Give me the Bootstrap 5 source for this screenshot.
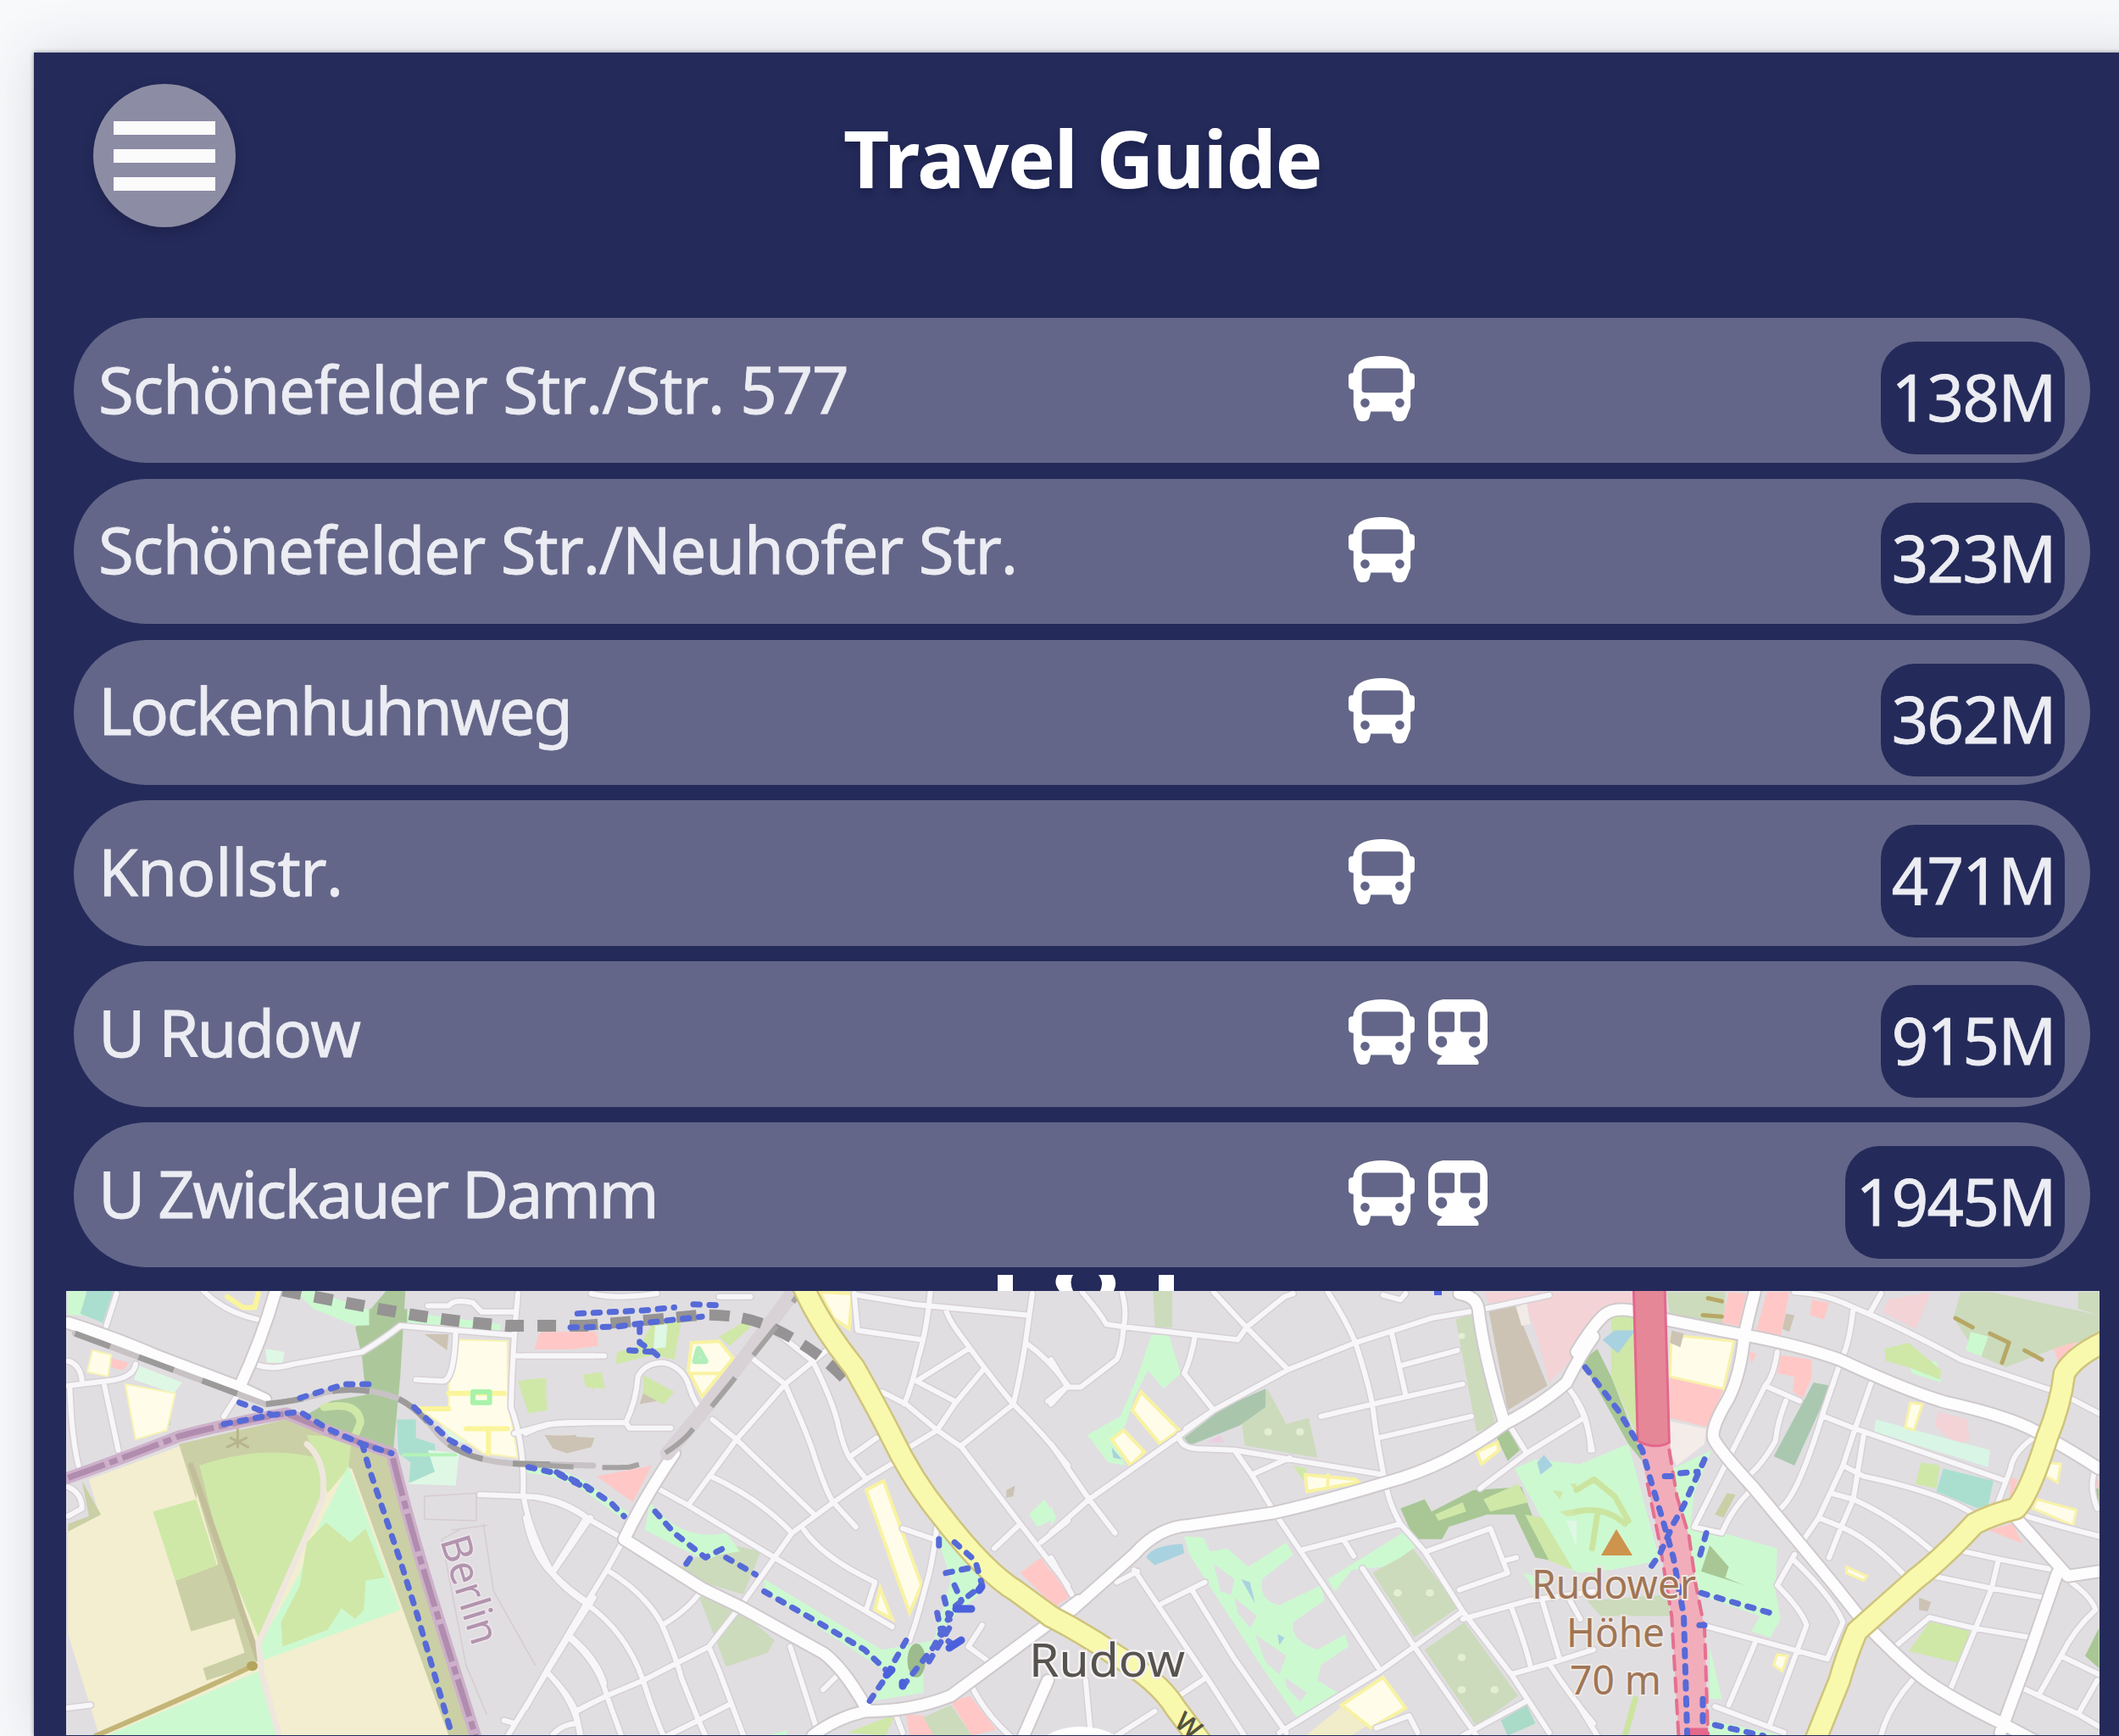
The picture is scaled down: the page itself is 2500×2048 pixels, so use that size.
<!DOCTYPE html>
<html lang="de">
<head>
<meta charset="utf-8">
<title>Travel Guide</title>
<link href="https://cdn.jsdelivr.net/npm/bootstrap@5.3.0/dist/css/bootstrap.min.css" rel="stylesheet">
<script src="https://cdn.jsdelivr.net/npm/bootstrap@5.3.0/dist/js/bootstrap.bundle.min.js"></script>
<style>
html,body{height:2048px;overflow:hidden}
body{background:#f8f9fb;font-family:"Noto Sans","Open Sans",sans-serif;padding:62px 0 0 40px}
.guide{background:#242b5a;width:2500px;height:1986px;box-shadow:0 0 60px rgba(60,60,80,.16),0 0 5px rgba(30,30,60,.45)}
.guide-head{height:313px;padding:37px 0 0 70px}
.menu-btn{width:168px;height:169px;background:#8c8ca4;gap:17px;box-shadow:0 6px 14px rgba(20,15,50,.35)}
.menu-btn:hover{background:#8c8ca4}
.menu-btn span{width:120px;height:16px;background:#fbfbfc}
.guide-title{color:#fff;font-weight:700;font-size:94px;line-height:110px;letter-spacing:-1.4px;margin:32px 0 0 717px;text-shadow:0 5px 10px rgba(15,15,50,.4);white-space:nowrap}
.stops{width:2379px;margin-left:47px;gap:18.4px}
.stop{height:171.4px;border-radius:86px;background:#636688;padding:0 30px 0 29px;color:#ececf3;font-size:76px;line-height:100px;font-kerning:none;-webkit-text-stroke:.8px #ececf3}
.stop-name{width:1475px;white-space:nowrap;padding-bottom:4px;letter-spacing:-1px}
.stop:nth-child(2) .stop-name{letter-spacing:-1.2px}
.stop:nth-child(3) .stop-name,.stop:nth-child(6) .stop-name{letter-spacing:-2.5px}
.stop:nth-child(4) .stop-name{letter-spacing:-.7px}
.stop:nth-child(5) .stop-name{letter-spacing:-2px}
.kinds{gap:16px;padding-bottom:4px}
.kinds svg{height:77px;display:block}
.dist{height:133px;border-radius:40px;background:#242b5a;padding:0 11px 3px 13px;margin-top:18px;letter-spacing:-1.5px}
.map-wrap{position:relative;width:2399px;height:524px;margin:28px 0 0 38px}
.map-wrap>svg{display:block}
.handle{position:absolute;left:1098px;top:-19px}
.map-svg path,.map-svg ellipse,.map-svg circle{vector-effect:non-scaling-stroke}
.ln{fill:none;stroke-linejoin:round;stroke-linecap:round}
</style>
</head>
<body>
<svg width="0" height="0" class="position-absolute">
<symbol id="bus" viewBox="0 0 80 80" preserveAspectRatio="none"><path fill="#fff" fill-rule="evenodd" d="M6 19C7 5 24 0 40 0s33 5 34 19l1 2h2q3 1 3 4v11q0 5-4 5l-1 1v20l-5 13q-2 5-8 5-7 0-8-4l-2-8H27l-2 8q-2 4-8 4-6 0-7-5L6 62V42l-1-1q-5 0-5-5V25q0-3 3-4h2zM21 15q-5 0-5 5v21q0 4 5 4h40q5 0 5-4V20q0-5-5-5zM20 52a5.500 5.500 0 1 0 0 11 5.500 5.500 0 0 0 0-11zm42 0a5.500 5.500 0 1 0 0 11 5.500 5.500 0 0 0 0-11z"/></symbol>
<symbol id="train" viewBox="0 0 72 80" preserveAspectRatio="none"><path fill="#fff" fill-rule="evenodd" d="M18 0h36q18 3 18 20v32q0 13-17 17l5 5q3 6-1 6H13q-4 0-1-6l5-5Q0 65 0 52V20Q0 3 18 0zM11 15q-3 0-3 3v19q0 3 3 3h18q3 0 3-3V18q0-3-3-3zm31 0q-3 0-3 3v19q0 3 3 3h18q3 0 3-3V18q0-3-3-3zM16 45a7 7 0 1 0 0 14 7 7 0 0 0 0-14zm40 0a7 7 0 1 0 0 14 7 7 0 0 0 0-14z"/></symbol>
</svg>
<main class="guide">
<header class="guide-head d-flex align-items-start">
<button class="menu-btn btn rounded-circle border-0 p-0 d-flex flex-column align-items-center justify-content-center" aria-label="Menu"><span></span><span></span><span></span></button>
<h1 class="guide-title">Travel Guide</h1>
</header>
<section class="stops d-flex flex-column">
<div class="stop d-flex align-items-center"><div class="stop-name">Schönefelder Str./Str. 577</div><div class="kinds d-flex"><svg width="78"><use href="#bus"/></svg></div><div class="dist d-flex align-items-center ms-auto">138M</div></div>
<div class="stop d-flex align-items-center"><div class="stop-name">Schönefelder Str./Neuhofer Str.</div><div class="kinds d-flex"><svg width="78"><use href="#bus"/></svg></div><div class="dist d-flex align-items-center ms-auto">323M</div></div>
<div class="stop d-flex align-items-center"><div class="stop-name">Lockenhuhnweg</div><div class="kinds d-flex"><svg width="78"><use href="#bus"/></svg></div><div class="dist d-flex align-items-center ms-auto">362M</div></div>
<div class="stop d-flex align-items-center"><div class="stop-name">Knollstr.</div><div class="kinds d-flex"><svg width="78"><use href="#bus"/></svg></div><div class="dist d-flex align-items-center ms-auto">471M</div></div>
<div class="stop d-flex align-items-center"><div class="stop-name">U Rudow</div><div class="kinds d-flex"><svg width="78"><use href="#bus"/></svg><svg width="70"><use href="#train"/></svg></div><div class="dist d-flex align-items-center ms-auto">915M</div></div>
<div class="stop d-flex align-items-center"><div class="stop-name">U Zwickauer Damm</div><div class="kinds d-flex"><svg width="78"><use href="#bus"/></svg><svg width="70"><use href="#train"/></svg></div><div class="dist d-flex align-items-center ms-auto">1945M</div></div>
</section>
<div class="map-wrap">
<svg class="handle" width="212" height="19" fill="#fff"><path d="M1 0h18v19H1zM72 0h18q-5 8 0 19H74q-8-10-2-19zM120 0h17q6 9 1 19h-16q5-10-2-19zM191 0h18v19h-18z"/></svg>
<svg class="map-svg" width="2399" height="524" viewBox="78 1524 2399 524">
<defs>
<g id="minor">
<g transform="translate(60 1480) scale(.40816 .36219)">
<path d="M190 130L160 235M440 120Q500 190 600 215M595 362Q640 380 700 360L900 320Q960 280 1010 235L1330 265M1170 260Q1165 420 1130 415L1055 410M50 350Q85 360 90 415M50 430L180 412Q240 400 245 360M55 440Q60 600 80 690M155 430L195 640M1350 130Q1335 300 1330 500Q1370 620 1365 780Q1380 900 1450 1040Q1500 1100 1560 1140M1090 170L1150 170Q1165 145 1220 160L1245 190H1340M1340 333H1600M1340 585L1440 555L1560 550M1240 785L1370 790Q1470 790 1550 860M1560 860L1450 1040M1570 1120Q1500 1240 1435 1360L1310 1590M1500 1245Q1580 1320 1600 1400M1435 1365Q1520 1460 1530 1580M1520 1490L1570 1460M45 1480L115 1470M1310 1520L1340 1530M540 460L500 530M50 760Q90 780 90 830L50 855"/>
</g>
<g transform="translate(620 1480) scale(.40816 .36219)">
<path d="M190 130Q260 150 380 130M560 140H650M0 333H195M0 585Q60 550 120 550H290L300 568H420M290 550Q320 480 325 400Q345 355 400 355Q460 370 475 440Q490 490 510 510M0 790Q100 800 175 860L285 930M175 860L75 1040M0 860Q20 980 75 1040Q110 1090 175 1140L235 1030M285 930L235 1030L175 1140L120 1245L60 1360L0 1480M235 1030Q350 1110 395 1210Q440 1330 450 1380L500 1520L520 1570M175 1140Q290 1230 340 1390Q370 1500 410 1600M120 1245Q210 1330 235 1440L280 1580M60 1360Q130 1440 145 1490L160 1570M145 1490L235 1440L340 1390L435 1335L530 1280L620 1150M80 1565Q110 1530 150 1530M410 1570L500 1520L595 1465M395 1210Q470 1160 510 1095M530 1280L560 1360L630 1570M390 770L470 820L720 990L1060 1215M470 820L535 720L610 605L750 425L870 315M540 540L610 605L835 850M535 725Q680 800 770 910M660 345L750 425Q820 600 835 660Q870 780 890 810L955 890M730 260L830 350Q880 460 900 540Q920 640 940 670L985 735M940 660L1015 600M620 1150L720 990L770 910L890 810L985 735L1065 680M805 900Q860 990 1010 1070L985 1160M1065 680Q1160 780 1190 870Q1180 1000 1155 1090Q1130 1200 1110 1260M1090 895L1180 930M950 130L960 250L1145 280M960 135L1120 165L1450 200M1170 125Q1160 250 1135 340Q1120 420 1095 490M1465 130L1445 290Q1430 400 1410 490L1260 625M1445 290Q1510 340 1568 430M1215 180Q1220 210 1260 270Q1350 410 1410 490Q1500 590 1568 690M1280 310L1130 415L1240 480M1325 375L1240 490L1190 575L1110 630M1030 450L1100 490L1190 575L1260 630L1430 880L1568 1080M1430 880L1355 960M1490 940L1568 870M1510 480L1568 430M765 1280Q800 1400 845 1560M860 1420L905 1370M1320 1210L1280 1280L1340 1330M1290 1410Q1330 1500 1400 1570M1070 1500L1090 1560"/>
</g>
<g transform="translate(1240 1480) scale(.40816 .36219)">
<path d="M90 125Q140 190 160 230L210 238L540 280L565 240L675 140L700 130M205 125Q220 190 210 238Q205 310 190 345L85 435H45L0 490M0 345L45 430M470 125L565 240L685 378M415 275Q405 340 385 390L470 510L390 570M0 620L110 800L185 910M375 590L110 800L0 910M375 590L470 510L685 378L880 290L1100 210L1230 185L1440 135M800 125Q850 210 880 290Q920 430 930 500Q940 600 965 740M985 260L1025 460M1010 365L1175 315M780 530L930 490L1190 425M945 600L1215 530M960 135L1010 150L1025 130M370 590Q370 630 420 635L530 640L960 720M530 640L580 720L650 850L800 1100L950 1355M580 720L690 665M970 765Q980 820 1010 880L1080 970L1190 1165L1330 1370L1440 1560M725 965L845 930L1010 880M845 930L875 985M1085 970L1270 895L1320 1040L1180 1095M1310 1000L1345 990M900 1025L1050 1280L1230 1570M1190 1165L1050 1280L950 1360L660 1560M1190 1190L1380 1130L1568 1100M1330 1150Q1370 1270 1385 1340M1420 1130L1470 1320M1330 1370L1440 1335L1568 1290M1440 1335Q1500 1440 1568 1530M1190 1570L1370 1460M1500 1130L1530 1190M1320 550L1375 650L1240 765M1375 650L1540 535M1490 430Q1540 500 1550 560L1565 640M240 1030L450 1380L570 1590M320 1140L445 1070M410 1100L530 1320L680 1560M0 990L60 1110M250 1035L190 1070M100 1390L115 1570M450 1380L370 1440M300 1490L190 1570M940 1545L1035 1505L1060 1560"/>
</g>
<g transform="translate(1860 1480) scale(.40816 .36219)">
<path d="M630 125Q720 130 800 175Q940 240 1110 345L1400 455L1510 520M880 130L850 190M800 175Q790 290 765 345L715 510Q680 640 650 720Q620 800 590 830M580 320Q570 400 545 430L340 890L420 910Q450 830 500 775M545 430L645 480M605 480Q580 550 575 610Q540 680 505 715M430 660L500 770M855 410L805 570L770 690L700 860L645 950M715 530L805 570L1240 740M770 690L830 725Q1060 780 1150 850M830 590L800 800L765 890L730 990M735 780L800 800Q920 860 1030 970M700 860L765 890Q850 930 950 1050M1320 600Q1260 650 1255 700L1215 820M1300 855Q1400 890 1510 920M1120 970L1220 995L1380 1030M1030 1050L1200 1090L1350 1120M1220 995L1200 1090L1150 1230L1080 1420M910 1290L1020 1185L1150 1220L1310 1250M630 980L580 1080Q650 1160 665 1210L560 1530M630 1000Q740 1120 770 1200L725 1320L380 1215M515 1270L440 1470M400 1475L600 1560M970 1390Q900 1480 880 1570M1430 1070Q1490 1120 1500 1160Q1440 1220 1400 1310L1510 1370M1400 1310L1335 1440M1280 1410L1450 1500L1510 1540M1450 1500L1505 1390M1500 700Q1480 760 1505 830M0 480Q40 560 40 640M0 1460L60 1570"/>
</g>
</g>
<g id="major">
<g transform="translate(60 1480) scale(.40816 .36219)"><path d="M50 225Q200 280 300 330L545 435L620 475M650 120Q610 280 545 435"/></g>
<g transform="translate(620 1480) scale(.40816 .36219)"><path d="M430 650Q340 800 285 930L510 1090L620 1150L860 1300Q920 1350 985 1480M830 1570Q900 1510 985 1490Q1120 1490 1230 1440L1500 1215L1600 1130M1510 1390L1440 1570"/></g>
<g transform="translate(1240 1480) scale(.40816 .36219)"><path d="M60 1160L150 1070L240 980Q310 890 400 885L640 845Q780 810 970 745Q1150 690 1310 555Q1420 490 1490 420Q1530 330 1568 270M1180 130Q1230 140 1235 180Q1250 330 1310 550"/></g>
<g transform="translate(1860 1480) scale(.40816 .36219)"><path d="M0 320Q50 230 80 200Q110 170 180 190M260 215L485 265Q650 300 760 345Q960 450 1070 485Q1250 530 1330 580Q1430 640 1510 700M515 125Q500 190 485 265Q475 390 440 470Q380 580 400 610Q420 650 510 760L650 950Q740 1070 830 1200Q940 1330 1010 1390Q1100 1460 1230 1530L1330 1590M1270 860L1420 1050L1510 1035M1390 1040L1310 1300L1225 1560"/></g>
</g>
<g id="yellow">
<path class="ln" transform="translate(620 1480) scale(.40816 .36219)" d="M800 100Q850 230 950 370Q1020 510 1060 600Q1120 740 1200 850Q1330 1040 1420 1100L1519 1182"/>
<path class="ln" transform="translate(1240 1480) scale(.40816 .36219)" d="M0 1182Q100 1240 190 1310Q310 1390 360 1480L440 1600"/>
<path class="ln" transform="translate(1860 1480) scale(.40816 .36219)" d="M1540 280Q1440 330 1410 390Q1400 490 1360 600Q1310 780 1270 830Q1200 850 1150 880Q1060 990 980 1060Q870 1170 810 1230Q780 1310 760 1390L685 1600"/>
</g>
</defs>
<path fill="#e0dee1" d="M78 1524h2399v524H78z"/>
<!-- land use -->
<g transform="translate(60 1480) scale(.40816 .36219)">
<path fill="#f3eed0" d="M110 735L390 620L600 600L1000 700L1210 1570H140L50 1240V900L140 850z"/>
<path fill="#cbcfa5" d="M390 615L680 540L880 600L985 650L1230 1570H1150L870 700L790 690L610 650L430 690L420 800L370 620zM360 1065L480 1015L500 990L540 1185L405 1230zM90 740L145 850L50 905V880L110 855zM390 660L430 690L600 1310L590 1340L450 1390L440 1350L560 1300z"/>
<path fill="#cfe8a8" d="M430 690Q610 620 770 665L790 770L600 1250L480 920zM295 840L420 800L480 1015L360 1065zM740 590L870 600L860 700L800 780z"/>
<path fill="#cdf9d1" d="M860 690L1010 1160L600 1330L610 1260L720 1040L760 920zM600 1360L655 1570H160zM50 120H100V200H50z"/>
<path fill="#cfe8a8" d="M795 875L865 940L910 895L965 1055L910 1065L905 1160L880 1190L840 1155L800 1225L670 1280L665 1200L720 1080L740 940z"/>
<path fill="#acc89b" d="M970 120H1025L1010 400L990 640L900 610L730 530L810 480L910 460L900 340L880 240z"/>
<path fill="#cdf9d1" d="M710 125L760 120L910 180Q1050 190 1300 230V250L1000 230L880 235L760 180z"/><path fill="#acc89b" d="M920 180h110v60h-110z"/>
<path class="ln" stroke="#cfe8a8" stroke-width="9" d="M790 500Q890 480 895 550L880 590"/>
<path fill="#aadfcf" d="M105 120H180L150 225L85 195zM1000 540H1055V600L1110 620L1115 710L1070 745H1035L1040 680L1005 650zM1200 285h30v50h-30zM310 510h35v50h-35z"/>
<path fill="#dff8e5" d="M1090 640L1180 650L1170 755L1030 750L1110 710zM255 365L380 420L355 455L240 410zM620 310L675 320L670 355H625zM1130 560L1210 580L1215 620L1160 610z"/>
<path fill="#fffde9" stroke="#f8f3b4" stroke-width="2" d="M215 425L360 455L335 575L245 605zM120 315L175 330L165 400L105 385zM1180 280L1320 285V470L1350 665L1250 650L1060 500H1150V430z"/>
<path class="ln" stroke="#faf59b" stroke-width="6" d="M1150 455H1310M1070 505H1150M1200 570H1320M1265 570V650M510 140L555 175H590L600 130"/>
<path fill="#ffc8c6" d="M175 340L225 355L210 380L175 370zM1410 260H1570L1560 290L1490 312L1400 305z"/>
<path fill="#cfe8a8" d="M1350 415L1425 405L1435 510L1380 520zM1540 390L1570 400V450zM1340 500L1360 560L1345 590z"/>
<path fill="#cdc3b4" d="M1080 262H1150L1145 315zM1430 595L1520 590L1500 645L1450 630z"/>
<path class="ln" stroke="#a8f2aa" stroke-width="6" d="M1220 450h48v35h-48z"/><path class="ln" stroke="#b4f2b8" stroke-width="4" d="M1020 655H1170"/>
<path class="ln" stroke="#d6cbd1" stroke-width="1.500" d="M1080 790L1230 780V870L1080 865zM1180 900L1130 930L1200 1340L1260 1500M1250 880L1280 1100L1400 1340M1160 900L1260 885"/>
<path class="ln" stroke="#c2be9a" stroke-width="7" d="M405 690L600 1320"/><path class="ln" stroke="#b7b58c" stroke-width="3" d="M540 570V630M520 600L570 630M565 600L510 630"/>
<path class="ln" stroke="#efe6de" stroke-width="7" d="M740 620Q800 680 785 800L600 1270L610 1370L660 1570"/>
<path class="ln" stroke="#c3b577" stroke-width="6" d="M130 1570Q400 1440 580 1345"/><circle cx="582" cy="1343" r="16" fill="#b3a55c"/>
</g>
<g transform="translate(620 1480) scale(.40816 .36219)">
<path fill="#ffc8c6" d="M45 255H205L210 300L130 312H25zM205 725L365 690L310 810zM1430 1040L1490 990L1570 1120L1530 1150zM1230 1460L1285 1440L1360 1550L1290 1570zM1100 1500L1150 1505L1180 1570H1110z"/>
<path fill="#cfe8a8" d="M370 220H450L430 345L370 330L260 360L265 320L330 300zM165 395L220 385L230 440L175 435zM340 395L430 450L400 490L340 460zM0 410L60 405V500L10 520zM560 270L640 215L650 240L590 300zM930 1560L1070 1500L1040 1570z"/>
<path fill="#dff8e5" d="M375 235L410 230L405 305L370 310z"/>
<path fill="#cdc3b4" d="M55 590L200 600L190 630L120 650L80 635zM340 455L380 480L330 490zM1390 770L1415 755L1410 790L1390 795z"/>
<path fill="#fffde9" stroke="#f8f2a2" stroke-width="4" d="M480 290L560 285L600 340L510 465L470 380zM480 390H570M850 125L945 130L935 245L890 210zM985 770L1035 740L1145 1080L1110 1170zM1025 1090L1060 1190L1010 1160z"/>
<path class="ln" stroke="#b2eeba" stroke-width="7" d="M490 350L500 310L520 350z"/>
<path fill="#ccdbbb" d="M560 940L680 970L630 1110L510 1070L450 1020zM500 1110L610 1150L720 1260L700 1300L580 1345L530 1200zM1150 1510L1230 1470L1290 1570H1180z"/>
<path fill="#cdf9d1" d="M360 810Q450 940 580 910L620 970L560 980L520 1000L345 900zM690 1060L1030 1290L1180 1260L1230 1060L1200 960V880L1330 1060L1310 1110L1220 1200L1150 1320L1150 1430L1010 1455L1040 1360L690 1100zM1455 850L1500 800L1535 860L1480 890zM700 1570L760 1550L750 1570z"/>
<ellipse cx="1130" cy="1325" rx="26" ry="55" fill="#9dbb8c"/>
<path class="ln" stroke="#cdf9d1" stroke-width="10" d="M0 700Q120 710 200 780L285 850"/>
</g>
<g transform="translate(1240 1480) scale(.40816 .36219)">
<path fill="#ccdbbb" d="M295 120H350V240H300zM625 440L680 555L745 535L770 665L560 625L550 540zM1170 215L1215 195L1285 560L1230 580zM930 1040L1045 960L1180 1150L1050 1250zM1080 1290L1195 1200L1350 1440L1230 1540z"/>
<path fill="#a9c6ad" d="M385 600L500 500L620 440V500L545 560L400 625z"/>
<path fill="#cdf9d1" d="M290 265H340L375 390L325 440L280 380L240 470L215 560L180 600L215 690L165 680L105 590L200 530L250 400zM385 920L440 925L460 970L510 960L570 1020L680 940L700 980L610 1060Q600 1130 660 1145L780 1080L790 1130L700 1200Q690 1260 770 1290L850 1240L860 1280L780 1340L770 1390L830 1430L710 1510L600 1330L480 1120L400 980zM800 1060L1030 900L1060 950L1010 990L960 1020L870 1030L820 1100zM1340 700L1400 670L1570 690V1040L1500 1030zM1365 1040L1430 1060L1400 1100zM0 820L15 860L0 890z"/>
<path fill="#e0dee1" d="M470 1010L530 1060L520 1110L490 1100zM530 1120L595 1180L575 1220L540 1170zM590 1240L680 1310L660 1370L620 1330zM675 1380L740 1430L720 1460L680 1410z"/>
<path fill="#a8c794" d="M1285 590L1320 565L1355 640L1320 675zM1010 830L1080 800L1100 840L1220 770L1360 760L1400 880L1450 1000L1400 990L1340 850L1260 850L1150 890L1130 930H1050z"/>
<path fill="#cfe8a8" d="M1250 800L1350 750L1380 810L1270 840zM1370 850L1420 860L1510 1030L1440 1000zM1110 850L1190 810L1200 840L1120 870zM700 690L740 700L730 740zM1450 770L1480 775L1470 800zM1500 750L1570 740V775L1520 780zM1470 840L1570 820V850L1490 855z"/>
<path fill="#dff8e5" d="M1490 870H1525L1545 950L1520 960z"/>
<path fill="#fffde9" stroke="#f8f2a2" stroke-width="4" d="M260 450L370 575L315 620L235 510zM210 575L270 645L230 690L175 605zM735 720L880 735L890 745L740 775zM800 715V765M1230 645L1290 615L1295 640L1245 685zM960 1380L1025 1480L925 1545L840 1470z"/>
<path fill="#f1ecc9" d="M840 1475L910 1540L860 1575H730z"/>
<path fill="#cdc3b4" d="M1265 185L1340 165L1435 430L1320 510z"/><path fill="#f3d3d6" d="M1250 125H1568V270L1440 420L1395 235L1370 165L1265 160z"/><path fill="#f1ebe6" d="M1345 175L1375 160L1385 230L1360 235z"/>
<path fill="#a9d2e0" d="M275 990Q290 950 380 945L385 975L300 1015zM1405 680L1425 655L1450 690L1415 720zM550 1060L575 1070L590 1140zM175 630L205 670L180 665zM655 1240L675 1250L660 1275z"/>
<path fill="#aadac8" d="M1300 1520L1375 1470L1400 1530L1320 1570z"/><path fill="#ffc8c6" d="M0 1030L50 1110L20 1140L0 1110z"/><path fill="#ebcfe0" d="M450 615L490 590L500 615z"/>
<g fill="#e3eed3"><circle cx="628" cy="580" r="12"/><circle cx="720" cy="580" r="12"/><circle cx="1002" cy="1105" r="12"/><circle cx="1095" cy="1105" r="12"/><circle cx="1187" cy="1315" r="12"/><circle cx="1187" cy="1420" r="12"/><circle cx="1282" cy="1420" r="12"/><circle cx="1187" cy="268" r="10"/></g>
</g>
<g transform="translate(1860 1480) scale(.40816 .36219)">
<path fill="#f3d3d6" d="M0 125H170V190L90 180L0 310zM900 150L1025 125L980 245L885 190zM1045 515L1130 540L1135 610L1090 615L1035 560z"/>
<path fill="#ccdbbb" d="M260 125H430L425 230L270 200zM1110 125H1200L1510 200V270L1380 310L1240 370L1160 330L1090 210zM1450 125H1510V200L1450 180zM30 1130L270 1110V1180H70z"/>
<path fill="#cdf9d1" d="M0 690L150 620L240 1000L100 1030L0 1040zM280 700L390 640L340 780L330 880L580 960L575 1100L590 1190L560 1250L505 1230L530 1180L350 1110L300 850zM385 1280L420 1450L385 1450zM1140 255L1190 270L1170 335L1125 315zM960 360L1040 350L1055 420L970 390zM385 1520L600 1570H380z"/>
<path fill="#cfe8a8" d="M890 310L960 290L1055 380L1050 410L960 370L895 350zM995 680L1050 690L1040 765L980 750zM1020 1200L1140 1215L1110 1335L960 1295zM100 200L175 210V590L100 400z"/>
<path class="ln" stroke="#cbe5a0" stroke-width="7" d="M0 770L50 735L110 790L150 870M0 840Q80 820 140 880M60 850L45 960M170 1450L140 1570"/>
<path fill="#a8c794" d="M15 350L60 310L100 400L170 600L200 690L150 620zM385 950L440 1020L430 1055L485 1080L360 1035zM1470 1310L1510 1220V1350zM1495 770L1510 760V810z"/>
<path fill="#a9d2e0" d="M75 280L110 250L170 250L120 325z"/>
<path fill="#aac8b0" d="M685 420L735 430L630 690L570 660z"/><path fill="#aadfcf" d="M1060 700L1205 740L1190 820L1160 830L1040 775z"/><path fill="#d9f5e5" d="M865 540L1195 640L1190 695L860 580z"/>
<path fill="#ffc8c6" d="M440 125L490 130L470 235L420 225zM550 125H615L590 270L520 250zM680 150L730 160L715 215L675 200zM270 405L425 440L380 565L270 535zM590 330L680 345V400L655 470L625 450L630 400L580 390zM1380 310L1445 285L1395 365zM1255 730L1275 735L1250 810zM1190 900L1260 880L1290 945zM1490 735H1510V770zM500 320L520 325L505 360z"/>
<path fill="#fffde9" stroke="#f8f2a8" stroke-width="3" d="M275 265L455 285L425 440L270 400zM965 485L1000 490L975 575L950 565zM1355 680L1400 685L1390 745L1350 720zM1330 800L1445 835L1435 885L1320 830zM780 1020L840 1050L830 1065L780 1040zM580 1305L610 1310L595 1360L570 1340z"/>
<path fill="#f3ece9" d="M270 545L375 570L370 620L290 690L270 650z"/>
<path fill="#cdc3b4" d="M275 250L310 260L300 305L270 290zM605 195L630 200L615 255L595 245zM990 1120L1025 1135L1015 1165L990 1160z"/><path fill="#cbcfa5" d="M435 780L460 785L425 860L400 850z"/>
<path class="ln" stroke="#b8a765" stroke-width="5" d="M380 145L420 155M365 200L420 205M1095 210L1145 240M1195 260L1250 290L1230 355M1295 315L1345 345"/>
</g>
<!-- streets -->
<use href="#minor" class="ln" stroke="#d6d0d5" stroke-width="9"/><use href="#minor" class="ln" stroke="#f7f6f8" stroke-width="6"/>
<use href="#major" class="ln" stroke="#cfc9cd" stroke-width="17"/><use href="#major" class="ln" stroke="#fdfdfd" stroke-width="13"/>
<!-- railway -->
<g class="ln">
<path transform="translate(620 1480) scale(.40816 .36219)" stroke="#d8d1d5" stroke-width="17" d="M770 130Q650 320 500 530L410 650"/>
<path transform="translate(60 1480) scale(.40816 .36219)" stroke="#959393" stroke-width="14" stroke-linecap="butt" stroke-dasharray="22 16" d="M670 120Q850 160 1000 190Q1150 220 1320 235H1568"/>
<path transform="translate(620 1480) scale(.40816 .36219)" stroke="#959393" stroke-width="13" stroke-linecap="butt" stroke-dasharray="24 15" d="M150 235Q330 220 500 200Q620 195 700 235Q850 310 940 430"/>
<path transform="translate(60 1480) scale(.40816 .36219)" stroke="#c8c2c5" stroke-width="7" d="M70 260L620 490Q720 480 800 450Q900 430 1000 470Q1060 500 1120 590Q1190 680 1370 685L1568 690"/>
<path transform="translate(60 1480) scale(.40816 .36219)" stroke="#9d9a9a" stroke-width="7" stroke-linecap="butt" stroke-dasharray="44 36" d="M70 260L620 490Q720 480 800 450Q900 430 1000 470Q1060 500 1120 590Q1190 680 1370 685L1490 688"/>
<path transform="translate(620 1480) scale(.40816 .36219)" stroke="#a5a2a2" stroke-width="6" stroke-linecap="butt" stroke-dasharray="44 34" d="M30 688Q200 700 300 695Q400 670 470 590Q560 470 730 230L790 130"/>
</g>
<!-- state border -->
<g class="ln" transform="translate(60 1480) scale(.40816 .36219)">
<path stroke="#cdb1ca" stroke-width="14" d="M50 730Q200 670 370 595Q520 550 680 520L830 590L985 650Q1040 900 1110 1150L1230 1580"/>
<path stroke="#b08cae" stroke-width="7" stroke-linecap="butt" stroke-dasharray="46 6 10 6" d="M50 730Q200 670 370 595Q520 550 680 520L830 590L985 650Q1040 900 1110 1150L1230 1580"/>
</g>
<use href="#yellow" stroke="#cfc47c" stroke-width="28"/><use href="#yellow" stroke="#f9f9ae" stroke-width="23"/>
<!-- motorway -->
<g transform="translate(1860 1480) scale(.40816 .36219)">
<path fill="#f2adbb" d="M175 600H268L290 790L325 920L345 1080L370 1220L380 1570H295L275 1180L240 940L205 750z"/>
<path class="ln" stroke="#e5708f" stroke-width="4" stroke-dasharray="16 10" d="M268 640L290 790L325 920L345 1080L370 1220L380 1570M295 1570L275 1180L240 940L205 750"/>
<path fill="#e68798" stroke="#e3688c" stroke-width="3" d="M165 110H255L268 615Q225 640 177 610z"/><path fill="#e3688c" d="M320 1545H380V1570H310z"/>
</g>
<!-- cycle paths -->
<g class="ln" stroke="#566ad8" stroke-width="7" stroke-linecap="butt" stroke-dasharray="7.500 11.500">
<path transform="translate(60 1480) scale(.40816 .36219)" d="M500 555L640 525L720 515L800 570L900 620L985 650M900 620L920 700L1010 1000L1060 1180L1160 1570M545 485L640 525M720 470L850 425H920M1050 500L1150 605L1230 655M1380 695L1460 715L1560 770"/>
<path transform="translate(620 1480) scale(.40816 .36219)" d="M150 195L340 185L430 175M485 165L560 168M130 240L260 238L350 225L510 205M330 235V290L370 320L400 350M300 315L370 320M90 712L180 760L250 815L285 855M375 840L430 910L520 990L580 955M580 990L665 1045M465 1010L480 985M690 1100L860 1210L980 1290L1050 1365L990 1465M1100 1260L1030 1400M1195 930V960M1240 940L1300 1000L1320 1080L1240 1150L1180 1280L1090 1410M1215 1040L1300 1020M1240 1080L1260 1130M1210 1120L1230 1210L1160 1340M1190 1170L1205 1250L1260 1290"/>
<path transform="translate(1860 1480) scale(.40816 .36219)" d="M25 370L120 510L190 640L215 740L250 870L280 990L310 1180L320 1570M370 670L310 820L280 880L240 980L215 1020M300 715L350 710M375 910L350 1010M360 1105L560 1170M400 1535L540 1570M365 1450V1540M255 725H275M355 1210H370"/>
</g>
<path class="ln" stroke="#4a60dc" stroke-width="9" d="M1128 1899H1146M1120 1945L1134 1936M1158 1873L1155 1877M1046 1977L1052 1971M1065 1990V1986"/>
<path fill="#4a60dc" d="M1692 1524h9v5h-9z"/>
<!-- labels -->
<g font-family="Noto Sans">
<text transform="translate(519 1818) rotate(73)" font-size="49" fill="#b294ae" stroke="#eee6ec" stroke-width="3" paint-order="stroke" textLength="132" lengthAdjust="spacingAndGlyphs">Berlin</text>
<text x="1214" y="1979" font-size="55" fill="#57534f" stroke="#f4f2f2" stroke-width="5" paint-order="stroke" textLength="184" lengthAdjust="spacingAndGlyphs">Rudow</text>
<g font-size="47" fill="#a07556" stroke="#eee8e3" stroke-width="4" paint-order="stroke" text-anchor="middle"><text x="1904" y="1887" textLength="194" lengthAdjust="spacingAndGlyphs">Rudower</text><text x="1906" y="1944" textLength="116" lengthAdjust="spacingAndGlyphs">Höhe</text><text x="1906" y="2000" textLength="108" lengthAdjust="spacingAndGlyphs">70 m</text></g>
<text transform="translate(1384 2036) rotate(38)" font-size="31" font-weight="600" fill="#55523c">W</text>
</g>
<path fill="#ce934d" d="M1907 1805L1926 1836H1889z"/>
<ellipse cx="1275" cy="2072" rx="56" ry="34" fill="#fff"/>
</svg>
</div>
</main>
</body>
</html>
